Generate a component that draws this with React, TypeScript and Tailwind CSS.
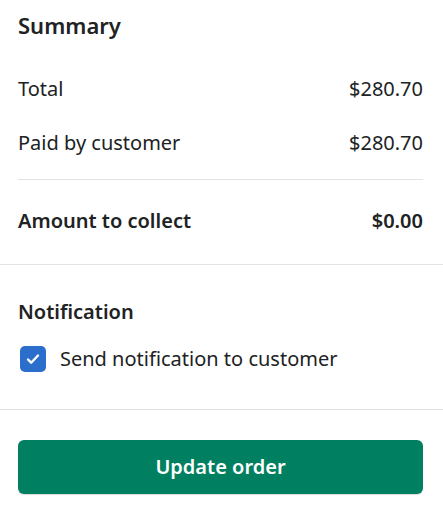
export default function App() {
  return (
    <div className="w-[443px] min-h-[517px] bg-white text-[#202223]" style={{ fontFamily: '"Noto Sans", "Open Sans", sans-serif' }}>
      {/* Summary */}
      <div className="pl-[18px] pr-[20px] pt-[8px] pb-[29px]">
        <h2 className="text-[22px] font-semibold leading-[34px]">Summary</h2>
        <div className="mt-[33px] flex justify-between text-[20px] leading-[28px]">
          <span>Total</span>
          <span>$280.70</span>
        </div>
        <div className="mt-[26px] flex justify-between text-[20px] leading-[28px]">
          <span>Paid by customer</span>
          <span>$280.70</span>
        </div>
        <div className="mt-[22px] border-t border-[#e1e3e5]" />
        <div className="mt-[27px] flex justify-between text-[20px] font-semibold leading-[28px]">
          <span>Amount to collect</span>
          <span>$0.00</span>
        </div>
      </div>

      <div className="border-t border-[#e1e3e5]" />

      {/* Notification */}
      <div className="pl-[18px] pr-[20px] pt-[33px] pb-[36px]">
        <h3 className="text-[20px] font-semibold leading-[28px]">Notification</h3>
        <label className="mt-[19px] flex items-center gap-[14px] pl-[2px]">
          <span className="flex h-[26px] w-[26px] items-center justify-center rounded-[5px] bg-[#2c6ecb]">
            <svg width="18" height="18" viewBox="0 0 18 18" fill="none">
              <path d="M4 9.5l3.2 3.2L14 5.5" stroke="white" strokeWidth="2.4" strokeLinecap="round" strokeLinejoin="round" />
            </svg>
          </span>
          <span className="text-[20px] leading-[28px]">Send notification to customer</span>
        </label>
      </div>

      <div className="border-t border-[#e1e3e5]" />

      {/* Action */}
      <div className="pl-[18px] pr-[20px] pt-[30px]">
        <button className="h-[54px] w-full rounded-[6px] bg-[#008060] text-[20px] font-semibold text-white shadow-[0_1px_1px_rgba(0,0,0,0.15)]">
          Update order
        </button>
      </div>
    </div>
  );
}
